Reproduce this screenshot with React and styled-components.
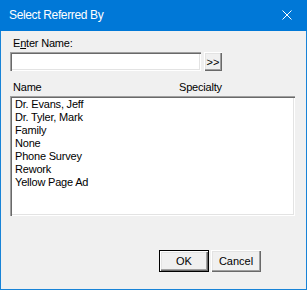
import React, { useState } from "react";
import styled, { createGlobalStyle } from "styled-components";

const GlobalStyle = createGlobalStyle`
  html, body {
    margin: 0;
    padding: 0;
    background: #f0f0f0;
  }
  * {
    box-sizing: border-box;
  }
`;

const Window = styled.div`
  width: 307px;
  height: 290px;
  display: flex;
  flex-direction: column;
  border: 1px solid #1883d7;
  border-top: none;
  background: #f0f0f0;
  font-family: "Liberation Sans", Arial, sans-serif;
  font-size: 11px;
  letter-spacing: -0.2px;
  color: #000;
`;

const TitleBar = styled.div`
  height: 31px;
  flex: none;
  display: flex;
  align-items: center;
  justify-content: space-between;
  background: #0078d7;
  color: #fff;
  padding: 0 9px 1px 9px;
  margin: 0 -1px;
`;

const Title = styled.span`
  font-family: "Liberation Sans", Arial, sans-serif;
  font-size: 12px;
  letter-spacing: -0.35px;
`;

const CloseIcon = styled.svg`
  width: 10px;
  height: 10px;
  margin-right: 6px;
`;

const Body = styled.div`
  flex: 1;
  display: flex;
  flex-direction: column;
  padding: 6px 11px 0 9px;
`;

const Label = styled.label`
  line-height: 13px;
  padding-left: 3px;
  margin-bottom: 2px;
`;

const InputRow = styled.div`
  display: flex;
  gap: 3px;
  align-items: flex-start;
`;

const TextInput = styled.input`
  width: 191px;
  height: 19px;
  margin: 0;
  padding: 2px 3px;
  border: none;
  background: #fff;
  font: inherit;
  outline: none;
  box-shadow: inset 1px 1px 0 #a0a0a0, inset 2px 2px 0 #696969,
    inset -1px -1px 0 #ffffff, inset -2px -2px 0 #e3e3e3;
`;

const Button = styled.button`
  width: ${(p) => p.$w}px;
  height: ${(p) => p.$h}px;
  margin: 0;
  padding: 0;
  border: ${(p) => (p.$default ? "1px solid #000" : "none")};
  background: #f0f0f0;
  font: inherit;
  color: #000;
  display: flex;
  align-items: center;
  justify-content: center;
  box-shadow: inset 1px 1px 0 #ffffff, inset -1px -1px 0 #696969,
    inset -2px -2px 0 #a0a0a0, inset 2px 2px 0 #e3e3e3;
`;

const Header = styled.div`
  display: flex;
  line-height: 13px;
  margin-top: 10px;
  margin-bottom: 2px;
`;

const HeaderCell = styled.span`
  width: ${(p) => p.$w}px;
  padding-left: 3px;
`;

const ListBox = styled.div`
  width: 285px;
  height: 120px;
  background: #fff;
  padding: 2px 2px;
  box-shadow: inset 1px 1px 0 #a0a0a0, inset 2px 2px 0 #696969,
    inset -1px -1px 0 #ffffff, inset -2px -2px 0 #e3e3e3;
`;

const ListItem = styled.div`
  height: 13px;
  line-height: 13px;
  padding-left: 3px;
  white-space: nowrap;
`;

const Footer = styled.div`
  display: flex;
  gap: 2px;
  padding-left: 149px;
  margin-top: 34px;
`;

const items = [
  "Dr. Evans, Jeff",
  "Dr. Tyler, Mark",
  "Family",
  "None",
  "Phone Survey",
  "Rework",
  "Yellow Page Ad",
];

export default function App() {
  const [name, setName] = useState("");

  return (
    <>
      <GlobalStyle />
      <Window>
        <TitleBar>
          <Title>Select Referred By</Title>
          <CloseIcon viewBox="0 0 10 10">
            <path d="M0.5 0.5 L9.5 9.5 M9.5 0.5 L0.5 9.5" stroke="#fff" strokeWidth="1" fill="none" />
          </CloseIcon>
        </TitleBar>
        <Body>
          <Label>
            E<u>n</u>ter Name:
          </Label>
          <InputRow>
            <TextInput value={name} onChange={(e) => setName(e.target.value)} />
            <Button $w={18} $h={19}>&gt;&gt;</Button>
          </InputRow>
          <Header>
            <HeaderCell $w={166}>Name</HeaderCell>
            <HeaderCell $w={100}>Specialty</HeaderCell>
          </Header>
          <ListBox>
            {items.map((item) => (
              <ListItem key={item}>{item}</ListItem>
            ))}
          </ListBox>
          <Footer>
            <Button $w={50} $h={22} $default>
              OK
            </Button>
            <Button $w={50} $h={22}>
              Cancel
            </Button>
          </Footer>
        </Body>
      </Window>
    </>
  );
}
